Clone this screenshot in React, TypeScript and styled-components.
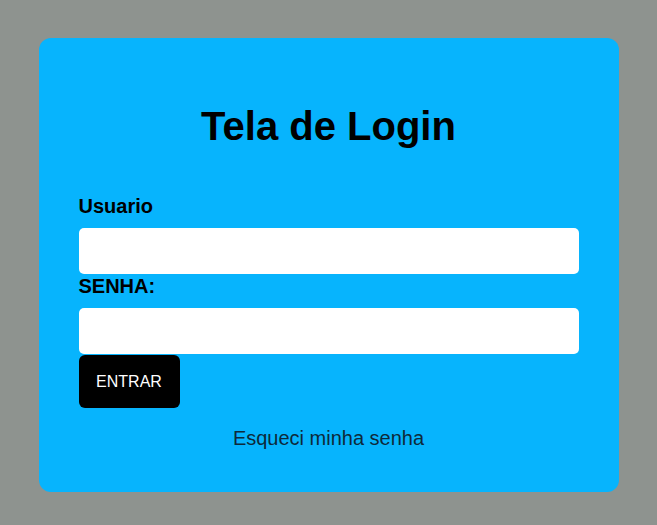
import React from "react";
import styled, { createGlobalStyle } from "styled-components";

const GlobalStyle = createGlobalStyle`
  html, body {
    margin: 0;
    padding: 0;
    background: #8e938f;
    font-family: "Liberation Sans", Arial, sans-serif;
  }
  * { box-sizing: border-box; }
`;

const Page = styled.div`
  min-height: 525px;
  display: flex;
  justify-content: center;
  align-items: flex-start;
  padding-top: 38px;
`;

const Card = styled.form`
  width: 580px;
  background: #07b4fd;
  border-radius: 12px;
  padding: 40px 40px 42px;
  display: flex;
  flex-direction: column;
`;

const Title = styled.h1`
  margin: 26px 0 46px;
  text-align: center;
  font-size: 40px;
  font-weight: 700;
  color: #000;
`;

const Label = styled.label`
  display: block;
  font-size: 20px;
  font-weight: 700;
  color: #000;
  line-height: 23px;
  margin-bottom: 10px;
`;

const Input = styled.input`
  width: 100%;
  height: 46px;
  margin-bottom: 1px;
  border: none;
  border-radius: 5px;
  background: #fff;
  outline: none;
  padding: 0 12px;
  font-size: 16px;
  font-family: inherit;
`;

const Button = styled.button`
  align-self: flex-start;
  width: 101px;
  height: 53px;
  border: none;
  border-radius: 6px;
  background: #000;
  color: #fff;
  font-family: "Liberation Sans", Arial, sans-serif;
  font-size: 16px;
  cursor: pointer;
`;

const Forgot = styled.a`
  margin-top: 19px;
  text-align: center;
  font-size: 20px;
  line-height: 23px;
  color: #0e2a3a;
  text-decoration: none;
`;

export default function App() {
  return (
    <>
      <GlobalStyle />
      <Page>
        <Card onSubmit={(e) => e.preventDefault()}>
          <Title>Tela de Login</Title>
          <Label htmlFor="usuario">Usuario</Label>
          <Input id="usuario" type="text" />
          <Label htmlFor="senha">SENHA:</Label>
          <Input id="senha" type="password" />
          <Button type="submit">ENTRAR</Button>
          <Forgot href="#">Esqueci minha senha</Forgot>
        </Card>
      </Page>
    </>
  );
}
